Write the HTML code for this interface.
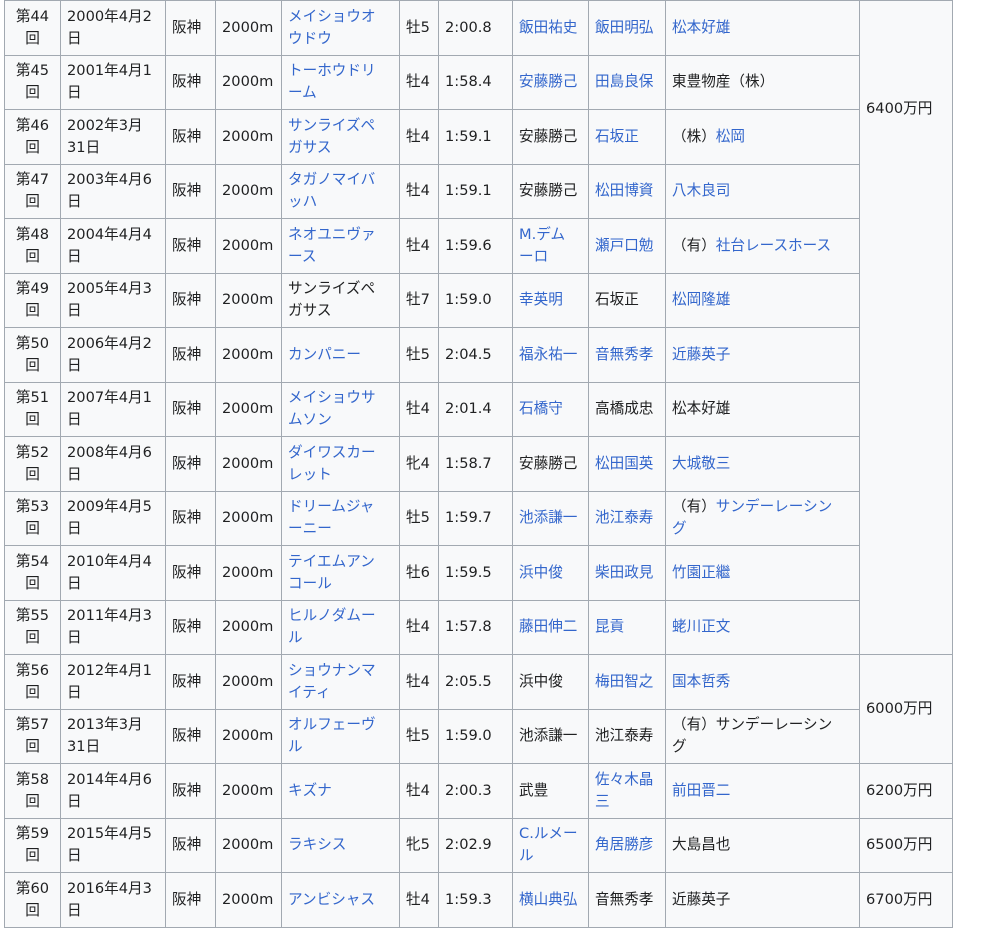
<!DOCTYPE html>
<html><head><meta charset="utf-8"><style>
html,body{margin:0;padding:0;background:#fff;}
table{position:absolute;left:4px;top:0;border-collapse:collapse;table-layout:fixed;width:948px;
font-family:"DejaVu Sans","Noto Sans CJK JP",sans-serif;font-size:14.6px;line-height:22px;color:#202122;background:#f8f9fa;}
td{border:1px solid #a2a9b1;padding:0 6px;vertical-align:middle;white-space:nowrap;overflow:hidden;}
td.c{text-align:center;padding:0;}
td.t{vertical-align:top;padding-top:97px;}
tr{height:54.5px;}
a{color:#3366cc;text-decoration:none;}
</style></head><body>
<table>
<colgroup><col style="width:56px"><col style="width:105px"><col style="width:50px"><col style="width:66px"><col style="width:118px"><col style="width:39px"><col style="width:74px"><col style="width:76px"><col style="width:77px"><col style="width:194px"><col style="width:93px"></colgroup>
<tr><td class="c">第44<br>回</td><td>2000年4月2<br>日</td><td>阪神</td><td>2000m</td><td><a>メイショウオ<br>ウドウ</a></td><td>牡5</td><td>2:00.8</td><td><a>飯田祐史</a></td><td><a>飯田明弘</a></td><td><a>松本好雄</a></td><td rowspan="12" class="t">6400万円</td></tr>
<tr><td class="c">第45<br>回</td><td>2001年4月1<br>日</td><td>阪神</td><td>2000m</td><td><a>トーホウドリ<br>ーム</a></td><td>牡4</td><td>1:58.4</td><td><a>安藤勝己</a></td><td><a>田島良保</a></td><td>東豊物産（株）</td></tr>
<tr><td class="c">第46<br>回</td><td>2002年3月<br>31日</td><td>阪神</td><td>2000m</td><td><a>サンライズペ<br>ガサス</a></td><td>牡4</td><td>1:59.1</td><td>安藤勝己</td><td><a>石坂正</a></td><td>（株）<a>松岡</a></td></tr>
<tr><td class="c">第47<br>回</td><td>2003年4月6<br>日</td><td>阪神</td><td>2000m</td><td><a>タガノマイバ<br>ッハ</a></td><td>牡4</td><td>1:59.1</td><td>安藤勝己</td><td><a>松田博資</a></td><td><a>八木良司</a></td></tr>
<tr><td class="c">第48<br>回</td><td>2004年4月4<br>日</td><td>阪神</td><td>2000m</td><td><a>ネオユニヴァ<br>ース</a></td><td>牡4</td><td>1:59.6</td><td><a>M.デム<br>ーロ</a></td><td><a>瀬戸口勉</a></td><td>（有）<a>社台レースホース</a></td></tr>
<tr><td class="c">第49<br>回</td><td>2005年4月3<br>日</td><td>阪神</td><td>2000m</td><td>サンライズペ<br>ガサス</td><td>牡7</td><td>1:59.0</td><td><a>幸英明</a></td><td>石坂正</td><td><a>松岡隆雄</a></td></tr>
<tr><td class="c">第50<br>回</td><td>2006年4月2<br>日</td><td>阪神</td><td>2000m</td><td><a>カンパニー</a></td><td>牡5</td><td>2:04.5</td><td><a>福永祐一</a></td><td><a>音無秀孝</a></td><td><a>近藤英子</a></td></tr>
<tr><td class="c">第51<br>回</td><td>2007年4月1<br>日</td><td>阪神</td><td>2000m</td><td><a>メイショウサ<br>ムソン</a></td><td>牡4</td><td>2:01.4</td><td><a>石橋守</a></td><td>高橋成忠</td><td>松本好雄</td></tr>
<tr><td class="c">第52<br>回</td><td>2008年4月6<br>日</td><td>阪神</td><td>2000m</td><td><a>ダイワスカー<br>レット</a></td><td>牝4</td><td>1:58.7</td><td>安藤勝己</td><td><a>松田国英</a></td><td><a>大城敬三</a></td></tr>
<tr><td class="c">第53<br>回</td><td>2009年4月5<br>日</td><td>阪神</td><td>2000m</td><td><a>ドリームジャ<br>ーニー</a></td><td>牡5</td><td>1:59.7</td><td><a>池添謙一</a></td><td><a>池江泰寿</a></td><td>（有）<a>サンデーレーシン<br>グ</a></td></tr>
<tr><td class="c">第54<br>回</td><td>2010年4月4<br>日</td><td>阪神</td><td>2000m</td><td><a>テイエムアン<br>コール</a></td><td>牡6</td><td>1:59.5</td><td><a>浜中俊</a></td><td><a>柴田政見</a></td><td><a>竹園正繼</a></td></tr>
<tr><td class="c">第55<br>回</td><td>2011年4月3<br>日</td><td>阪神</td><td>2000m</td><td><a>ヒルノダムー<br>ル</a></td><td>牡4</td><td>1:57.8</td><td><a>藤田伸二</a></td><td><a>昆貢</a></td><td><a>蛯川正文</a></td></tr>
<tr><td class="c">第56<br>回</td><td>2012年4月1<br>日</td><td>阪神</td><td>2000m</td><td><a>ショウナンマ<br>イティ</a></td><td>牡4</td><td>2:05.5</td><td>浜中俊</td><td><a>梅田智之</a></td><td><a>国本哲秀</a></td><td rowspan="2">6000万円</td></tr>
<tr><td class="c">第57<br>回</td><td>2013年3月<br>31日</td><td>阪神</td><td>2000m</td><td><a>オルフェーヴ<br>ル</a></td><td>牡5</td><td>1:59.0</td><td>池添謙一</td><td>池江泰寿</td><td>（有）サンデーレーシン<br>グ</td></tr>
<tr><td class="c">第58<br>回</td><td>2014年4月6<br>日</td><td>阪神</td><td>2000m</td><td><a>キズナ</a></td><td>牡4</td><td>2:00.3</td><td>武豊</td><td><a>佐々木晶<br>三</a></td><td><a>前田晋二</a></td><td>6200万円</td></tr>
<tr><td class="c">第59<br>回</td><td>2015年4月5<br>日</td><td>阪神</td><td>2000m</td><td><a>ラキシス</a></td><td>牝5</td><td>2:02.9</td><td><a>C.ルメー<br>ル</a></td><td><a>角居勝彦</a></td><td>大島昌也</td><td>6500万円</td></tr>
<tr><td class="c">第60<br>回</td><td>2016年4月3<br>日</td><td>阪神</td><td>2000m</td><td><a>アンビシャス</a></td><td>牡4</td><td>1:59.3</td><td><a>横山典弘</a></td><td>音無秀孝</td><td>近藤英子</td><td>6700万円</td></tr>
</table>
</body></html>
